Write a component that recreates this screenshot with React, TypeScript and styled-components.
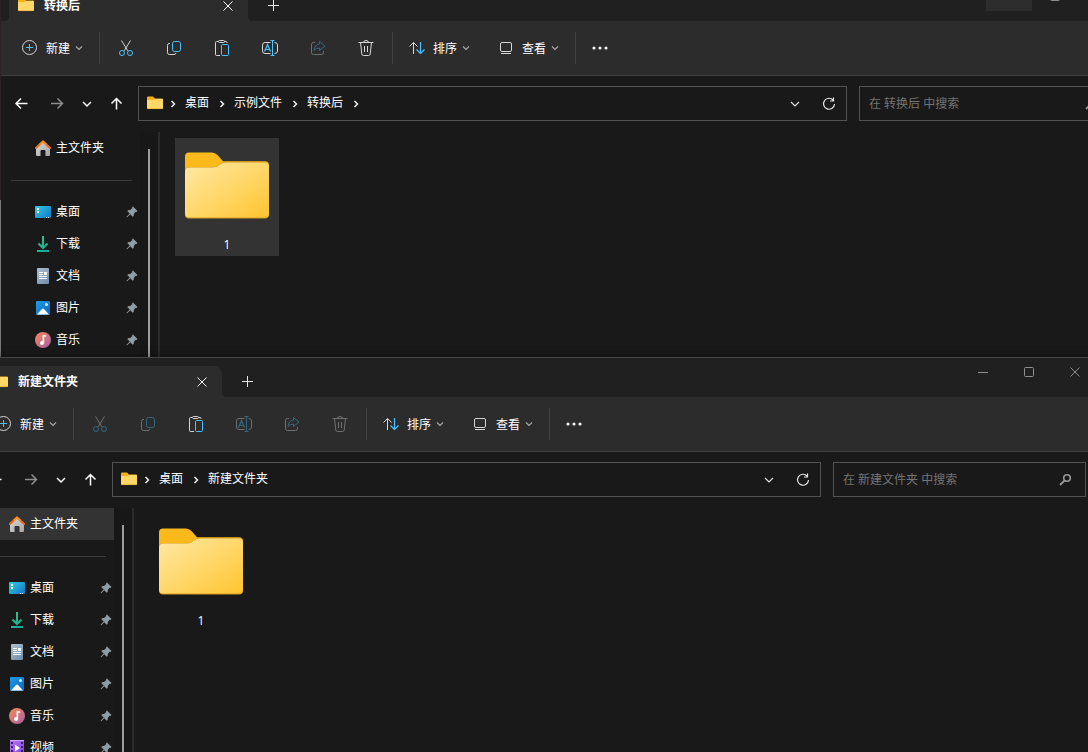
import React from 'react';
import styled, { createGlobalStyle, css } from 'styled-components';

const uiFont = `"Open Sans", "Noto Sans CJK SC", sans-serif`;

const GlobalStyle = createGlobalStyle`
  *, *::before, *::after { box-sizing: border-box; }
  body {
    margin: 0;
    background: #191919;
    color: #fff;
    font: 12px/16px ${uiFont};
    overflow: hidden;
  }
  button, input { font: inherit; color: inherit; }
  ul { list-style: none; margin: 0; padding: 0; }
  svg { display: block; flex: none; }
`;

const Desktop = styled.div`
  position: relative;
  height: 100vh;
  overflow: hidden;
  background: linear-gradient(#3b2c2d 0 200px, #9a9a9a 200px);
`;

const Frame = styled.section<{ $left: number; $top: number; $right: number }>`
  position: absolute;
  left: ${(p) => p.$left}px;
  right: ${(p) => p.$right}px;
  top: ${(p) => p.$top}px;
  bottom: 0;
  display: flex;
  flex-direction: column;
  border-top: 1px solid #454545;
  background: #191919;
  box-shadow: 0 0 8px rgba(0, 0, 0, 0.5);
`;

const TitleBar = styled.header`
  display: flex;
  height: 39px;
  padding-left: 8px;
  background: #202020;
`;

const Tab = styled.div`
  position: relative;
  display: flex;
  align-items: center;
  align-self: flex-end;
  width: 239px;
  height: 31px;
  padding: 0 8px 0 9px;
  background: #2c2c2c;
  border-radius: 8px 8px 0 0;
  font-weight: 700;
  &::before, &::after {
    content: '';
    position: absolute;
    bottom: 0;
    width: 4px;
    height: 4px;
  }
  &::before { left: -4px; background: radial-gradient(circle at 0 0, transparent 4px, #2c2c2c 4px); }
  &::after { right: -4px; background: radial-gradient(circle at 100% 0, transparent 4px, #2c2c2c 4px); }
`;

const TabTitle = styled.span`
  flex: 1;
  padding-left: 10px;
`;

const PlainButton = styled.button`
  display: flex;
  align-items: center;
  justify-content: center;
  padding: 0;
  border: 0;
  background: none;
`;

const TabButton = styled(PlainButton)`
  width: 24px;
  height: 24px;
`;

const NewTabButton = styled(PlainButton)`
  align-self: flex-end;
  width: 32px;
  height: 31px;
  margin-left: 9px;
`;

const WindowControls = styled.div`
  display: flex;
  margin-left: auto;
`;

const ControlButton = styled(PlainButton)<{ $hover?: boolean }>`
  width: 46px;
  height: 29px;
  padding-bottom: 1px;
  color: #8f8f8f;
  background: ${(p) => (p.$hover ? '#2d2d2d' : 'none')};
`;

const Toolbar = styled.div`
  display: flex;
  align-items: center;
  height: 55px;
  padding-left: 7px;
  background: #2c2c2c;
  border-bottom: 1px solid #3e3e3e;
`;

const ToolButton = styled(PlainButton)`
  width: 48px;
  height: 32px;
  &:disabled { opacity: 0.4; }
`;

const MoreButton = styled(ToolButton)`
  width: 44px;
`;

const MenuButton = styled(PlainButton)`
  height: 32px;
  padding: 0 14px;
`;

const MenuLabel = styled.span`
  padding: 2px 5px 0 8px;
`;

const Separator = styled.span`
  width: 1px;
  height: 32px;
  margin: 0 2px;
  background: #414141;
`;

const AddressRow = styled.div`
  display: flex;
  align-items: center;
  height: 56px;
  padding: 0 12px 1px 4px;
`;

const Nav = styled.nav`
  display: flex;
  gap: 1px;
  width: 133px;
`;

const NavButton = styled(PlainButton)<{ $narrow?: boolean }>`
  width: ${(p) => (p.$narrow ? 24 : 34)}px;
  height: 32px;
  &:disabled { color: #8e8e8e; }
`;

const fieldBox = css`
  display: flex;
  align-items: center;
  height: 35px;
  border: 1px solid #535353;
`;

const AddressBox = styled.div`
  ${fieldBox}
  flex: 1;
  min-width: 0;
  margin-right: 12px;
  padding-left: 8px;
`;

const Crumbs = styled.div`
  display: flex;
  align-items: center;
  flex: 1;
  padding-left: 6px;
`;

const Crumb = styled.a`
  padding: 0 9px 2px 8px;
  color: inherit;
  text-decoration: none;
  white-space: nowrap;
`;

const SearchBox = styled.label`
  ${fieldBox}
  width: 253px;
  padding: 0 13px 0 9px;
  color: #9a9a9a;
`;

const SearchInput = styled.input`
  flex: 1;
  min-width: 0;
  padding: 0;
  border: 0;
  outline: 0;
  background: none;
  &::placeholder { color: #747474; opacity: 1; }
`;

const Body = styled.div`
  display: flex;
  flex: 1;
  min-height: 0;
  overflow: hidden;
`;

const Sidebar = styled.aside`
  width: 139px;
`;

const PlaceRow = styled.a<{ $selected?: boolean }>`
  display: flex;
  align-items: center;
  gap: 5px;
  height: 32px;
  padding: 0 2px 0 34px;
  color: inherit;
  text-decoration: none;
  background: ${(p) => (p.$selected ? '#333' : 'none')};
`;

const PlaceName = styled.span`
  flex: 1;
`;

const Divider = styled.hr`
  height: 1px;
  margin: 16px 8px 15px 10px;
  border: 0;
  background: #3a3a3a;
`;

const ScrollTrack = styled.div`
  width: 18px;
  padding: 17px 8px 0;
  background: #171717;
`;

const ScrollThumb = styled.div`
  width: 2px;
  height: 100%;
  background: #9d9d9d;
`;

const Splitter = styled.div`
  width: 2px;
  background: #2b2b2b;
`;

const Content = styled.main`
  display: flex;
  align-items: flex-start;
  flex: 1;
  padding: 6px 15px;
`;

const Tile = styled.button<{ $selected?: boolean }>`
  display: flex;
  flex-direction: column;
  align-items: center;
  gap: 18px;
  width: 104px;
  padding: 14px 0 3px;
  border: 0;
  background: ${(p) => (p.$selected ? '#333' : 'none')};
`;

const blue = '#4cc2ff';
const grey = '#d6d6d6';

const SmallFolder = () => (
  <svg width="16" height="15" viewBox="0 0 16 15">
    <path d="M0 1.500Q0 .5 1 .5h5l2 2h7q1 0 1 1V12H0z" fill="#f7b012" />
    <path d="M0 4.500Q0 4 .6 4H6l1.600-1H15.400q.6 0 .6.6V12q0 1-1 1H1q-1 0-1-1z" fill="#ffd868" />
    <path d="M.5 12.600h15" stroke="#e9b33a" strokeWidth=".8" />
  </svg>
);

const LargeFolder = ({ id }: { id: string }) => (
  <svg width="84" height="67" viewBox="0 0 84 67">
    <defs>
      <linearGradient id={id} x1="0" y1="0" x2="1" y2="1">
        <stop offset="0" stopColor="#ffe9a6" />
        <stop offset="1" stopColor="#ffc530" />
      </linearGradient>
    </defs>
    <path d="M0 4.500Q0 .5 4 .5H27Q30 .5 32.500 3L38 9.300H80Q84 9.300 84 13.300V30H0z" fill="#fbb91b" />
    <path d="M0 20Q0 15 4.500 15H28Q32 15 34.500 12.500Q37 10 41 10H80Q84 10 84 14V62.500Q84 66.500 80 66.500H4Q0 66.500 0 62.500z" fill="#d19a22" />
    <path d="M0 20Q0 15.500 4.500 15.500H28Q32 15.500 34.500 13Q37 10.500 41 10.500H80Q84 10.500 84 14.500V61.500Q84 65.500 80 65.500H4Q0 65.500 0 61.500z" fill={`url(#${id})`} />
  </svg>
);

const Close = () => (
  <svg width="10" height="10" fill="none" stroke="currentColor">
    <path d="M.5.5l9 9M9.500.5l-9 9" />
  </svg>
);
const Plus = () => (
  <svg width="11" height="11" fill="none" stroke="#e8e8e8"><path d="M5.500 0v11M0 5.500h11" /></svg>
);
const Minimize = () => (
  <svg width="10" height="10" stroke="currentColor"><path d="M0 5.500h10" /></svg>
);
const Maximize = () => (
  <svg width="10" height="10" fill="none" stroke="currentColor"><rect x=".5" y=".5" width="9" height="9" rx="1" /></svg>
);
const Caret = () => (
  <svg width="8" height="6" viewBox="0 0 8 6" fill="none" stroke="#a8a8a8" strokeWidth="1.200"><path d="M1 1.500l3 3 3-3" /></svg>
);
const NewIcon = () => (
  <svg width="16" height="16" viewBox="0 0 16 16" fill="none">
    <circle cx="7.500" cy="7.500" r="7" stroke={grey} />
    <path d="M7.500 4v7M4 7.500h7" stroke={blue} />
  </svg>
);
const CutIcon = () => (
  <svg width="16" height="16" viewBox="0 0 16 16" fill="none">
    <path d="M3.500.5l6.300 10.300M12.500.5L6.200 10.800" stroke={grey} />
    <circle cx="4" cy="13" r="2.500" stroke={blue} />
    <circle cx="12" cy="13" r="2.500" stroke={blue} />
  </svg>
);
const CopyIcon = () => (
  <svg width="16" height="16" viewBox="0 0 16 16" fill="none">
    <path d="M4 3.500H3Q1.500 3.500 1.500 5.500v7q0 2 2 2H8q1.500 0 2-1.500" stroke={grey} />
    <rect x="6.500" y="1.500" width="8" height="10" rx="2" stroke={blue} />
  </svg>
);
const PasteIcon = () => (
  <svg width="16" height="18" viewBox="0 0 16 18" fill="none">
    <path d="M4 2.500H2.500q-1 0-1 1v12q0 1 1 1H6M10 2.500h2q1 0 1 1V4" stroke={grey} />
    <rect x="4.500" y="1.500" width="6" height="2" rx="1" stroke={grey} />
    <rect x="7.500" y="5.500" width="7" height="11" rx="1" stroke={blue} />
  </svg>
);
const RenameIcon = () => (
  <svg width="18" height="16" viewBox="0 0 18 16" fill="none">
    <path d="M9.500 2.500H4q-2.500 0-2.500 2.500v6q0 2.500 2.500 2.500h5.500M13.500 2.500q3 0 3 2.500v6q0 2.500-3 2.500" stroke={grey} />
    <path d="M3.500 11.500L6.500 4.500l3 7M4.500 9.500h4" stroke={blue} strokeWidth="1.200" />
    <path d="M11.500.5v15M9.500.5h4M9.500 15.500h4" stroke={blue} />
  </svg>
);
const ShareIcon = () => (
  <svg width="16" height="16" viewBox="0 0 16 16" fill="none">
    <path d="M5 2.500H3.500q-2 0-2 2v8q0 2 2 2h8q2 0 2-2V11" stroke={grey} />
    <path d="M9.500 1.500l5.500 4.500-5.500 4.500V8Q6 8 4 10.500 4.500 4.500 9.500 4z" stroke={blue} strokeLinejoin="round" />
  </svg>
);
const TrashIcon = () => (
  <svg width="16" height="18" viewBox="0 0 16 18" fill="none" stroke={grey}>
    <path d="M.5 3.500h15M5.500 3.500Q5.500 1.500 8 1.500t2.500 2M2.500 3.500l1.300 11.500q.2 1.500 1.700 1.500h5q1.500 0 1.700-1.500L13.500 3.500M6.500 7v6M9.500 7v6" />
  </svg>
);
const SortIcon = () => (
  <svg width="16" height="14" viewBox="0 0 16 14" fill="none">
    <path d="M4.500 13V1.500M.5 5.500l4-4 4 4" stroke={grey} />
    <path d="M11.500 1v11.500M7.500 8.500l4 4 4-4" stroke={blue} strokeWidth="1.200" />
  </svg>
);
const ViewIcon = () => (
  <svg width="16" height="14" viewBox="0 0 16 14" fill="none" stroke={grey}>
    <rect x="2.500" y="1.500" width="11" height="9" rx="1.500" />
    <path d="M3 12.500h10" />
  </svg>
);
const DotsIcon = () => (
  <svg width="16" height="4" fill="#f2f2f2"><circle cx="2" cy="2" r="1.600" /><circle cx="8" cy="2" r="1.600" /><circle cx="14" cy="2" r="1.600" /></svg>
);

const arrows = {
  back: 'M12.500 6.500H1.500M6 1.500l-5 5 5 5',
  forward: 'M1 6.500h11M7.500 1.500l5 5-5 5',
  recent: 'M3 5l4 4 4-4',
  up: 'M6.500 12.500V1.500M1.500 6.500l5-5 5 5',
};
const Arrow = ({ kind }: { kind: keyof typeof arrows }) => (
  <svg width="14" height="14" fill="none" stroke="currentColor" strokeWidth="1.500"><path d={arrows[kind]} /></svg>
);
const CrumbArrow = () => (
  <svg width="8" height="8" fill="none" stroke="#f0f0f0" strokeWidth="1.500"><path d="M2.500 1L5.500 4l-3 3" /></svg>
);
const DropArrow = () => (
  <svg width="10" height="8" fill="none" stroke="#e0e0e0" strokeWidth="1.200"><path d="M1 2l4 4 4-4" /></svg>
);
const RefreshIcon = () => (
  <svg width="14" height="14" fill="none" stroke="#e6e6e6" strokeWidth="1.200">
    <path d="M11.300 3.300A5.500 5.500 0 1 0 12.500 7M11.500 .5v3.500H8" />
  </svg>
);
const SearchIcon = () => (
  <svg width="13" height="13" fill="none" stroke="currentColor">
    <circle cx="8" cy="5" r="3.300" strokeWidth="1.600" />
    <path d="M5.500 7.500L1 12" strokeWidth="1.800" />
  </svg>
);
const PinIcon = () => (
  <svg width="12" height="12" viewBox="0 0 12 12" fill="#8f9ca4">
    <path d="M7 .5L11.500 5l-1 1-.8-.2L7.800 8l-.1 2-1 .8-2.500-2.500L1.200 11.200H.7v-.6l3-3L1.200 5.100 2 4.300l2-.2 2.200-1.900-.2-.8z" />
  </svg>
);

type PlaceKind = 'home' | 'desktop' | 'download' | 'document' | 'picture' | 'music' | 'video';

const PlaceIcon = ({ kind, scope }: { kind: PlaceKind; scope: string }) => {
  const id = `${scope}-${kind}`;
  const stops: Record<PlaceKind, [string, string]> = {
    home: ['#dedede', '#a3a3a3'],
    desktop: ['#35d3e6', '#0f6fc4'],
    download: ['#35cf85', '#12a09a'],
    document: ['#b4c5d6', '#6a86a3'],
    picture: ['#1fa0ea', '#0b62b8'],
    music: ['#f58a55', '#a85fa8'],
    video: ['#b779f2', '#7a3fd8'],
  };
  const fill = `url(#${id})`;
  return (
    <svg width="16" height="16" viewBox="0 0 16 16" fill="none">
      <defs>
        <linearGradient id={id} x1="0" y1="0" x2="16" y2="16" gradientUnits="userSpaceOnUse">
          <stop offset="0" stopColor={stops[kind][0]} />
          <stop offset="1" stopColor={stops[kind][1]} />
        </linearGradient>
      </defs>
      {kind === 'home' && (
        <>
          <path d="M1 7l7-6 7 6v8q0 1-1 1h-3.500v-5q0-1-1-1h-3q-1 0-1 1v5H2q-1 0-1-1z" fill={fill} />
          <path d="M.8 8L8 1.400 15.200 8" stroke="#e8681a" strokeWidth="2" strokeLinejoin="round" strokeLinecap="round" />
          <path d="M4.500 4.500L8 1.400l3.500 3.100" stroke="#f79421" strokeWidth="1.600" strokeLinejoin="round" />
        </>
      )}
      {kind === 'desktop' && (
        <>
          <rect y="2" width="16" height="12" rx="1" fill={fill} />
          <path d="M2 4h2v2H2zM2 7h2v2H2zM11 13h1v1h-1zM13 13h1v1h-1z" fill="#fff" />
        </>
      )}
      {kind === 'download' && (
        <>
          <path d="M8 0v12M3.500 7.500L8 12l4.500-4.500" stroke={fill} strokeWidth="2" />
          <path d="M2 14h12v2H2z" fill={fill} />
        </>
      )}
      {kind === 'document' && (
        <>
          <rect x="2" width="12" height="16" rx="1" fill={fill} />
          <path d="M4 4.500h4M4 6.500h4M4 8.500h8M4 10.500h8" stroke="#fff" />
          <path d="M9 4h3v3H9z" fill="#fff" />
        </>
      )}
      {kind === 'picture' && (
        <>
          <rect x="1" y="1" width="14" height="14" rx="1" fill={fill} />
          <path d="M2 14.500L7 9q1-1 2 0l5 5.500z" fill="#fff" />
          <circle cx="11.500" cy="4.500" r="1.500" fill="#cfefff" />
        </>
      )}
      {kind === 'music' && (
        <>
          <circle cx="8" cy="8" r="8" fill={fill} />
          <circle cx="7" cy="11" r="2" fill="#fff" />
          <path d="M8.400 11V4h2.800" stroke="#fff" strokeWidth="1.600" />
        </>
      )}
      {kind === 'video' && (
        <>
          <rect x="1" width="14" height="16" rx="1" fill={fill} />
          <path d="M1 0h14v1H1z" fill="#d3a6ff" />
          <path d="M3 2v14M13 2v14" stroke="#3d1a80" strokeWidth="2" strokeDasharray="2 2" />
          <path d="M6 4.500v7l5-3.500z" fill="#fff" />
        </>
      )}
    </svg>
  );
};

interface Place {
  name: string;
  kind: PlaceKind;
}

const pinned: Place[] = [
  { name: '桌面', kind: 'desktop' },
  { name: '下载', kind: 'download' },
  { name: '文档', kind: 'document' },
  { name: '图片', kind: 'picture' },
  { name: '音乐', kind: 'music' },
];

interface ExplorerProps {
  id: string;
  title: string;
  path: string[];
  places: Place[];
  openPath?: boolean;
  left: number;
  right: number;
  top: number;
  hasSelection?: boolean;
  homeSelected?: boolean;
}

const Explorer = ({ id, title, path, places, openPath, left, right, top, hasSelection, homeSelected }: ExplorerProps) => (
  <Frame $left={left} $right={right} $top={top} aria-label={title}>
    <TitleBar>
      <Tab>
        <SmallFolder />
        <TabTitle>{title}</TabTitle>
        <TabButton aria-label="关闭标签页"><Close /></TabButton>
      </Tab>
      <NewTabButton aria-label="新标签页"><Plus /></NewTabButton>
      <WindowControls>
        <ControlButton aria-label="最小化" $hover={hasSelection}><Minimize /></ControlButton>
        <ControlButton aria-label="最大化"><Maximize /></ControlButton>
        <ControlButton aria-label="关闭"><Close /></ControlButton>
      </WindowControls>
    </TitleBar>
    <Toolbar>
      <MenuButton><NewIcon /><MenuLabel>新建</MenuLabel><Caret /></MenuButton>
      <Separator />
      <ToolButton aria-label="剪切" disabled={!hasSelection}><CutIcon /></ToolButton>
      <ToolButton aria-label="复制" disabled={!hasSelection}><CopyIcon /></ToolButton>
      <ToolButton aria-label="粘贴"><PasteIcon /></ToolButton>
      <ToolButton aria-label="重命名" disabled={!hasSelection}><RenameIcon /></ToolButton>
      <ToolButton aria-label="共享" disabled><ShareIcon /></ToolButton>
      <ToolButton aria-label="删除" disabled={!hasSelection}><TrashIcon /></ToolButton>
      <Separator />
      <MenuButton><SortIcon /><MenuLabel>排序</MenuLabel><Caret /></MenuButton>
      <MenuButton><ViewIcon /><MenuLabel>查看</MenuLabel><Caret /></MenuButton>
      <Separator />
      <MoreButton aria-label="更多"><DotsIcon /></MoreButton>
    </Toolbar>
    <AddressRow>
      <Nav>
        <NavButton aria-label="后退"><Arrow kind="back" /></NavButton>
        <NavButton aria-label="前进" disabled><Arrow kind="forward" /></NavButton>
        <NavButton aria-label="最近的位置" $narrow><Arrow kind="recent" /></NavButton>
        <NavButton aria-label="上移"><Arrow kind="up" /></NavButton>
      </Nav>
      <AddressBox>
        <SmallFolder />
        <Crumbs>
          <CrumbArrow />
          {path.map((part, i) => (
            <React.Fragment key={part}>
              <Crumb href="#">{part}</Crumb>
              {(openPath || i < path.length - 1) && <CrumbArrow />}
            </React.Fragment>
          ))}
        </Crumbs>
        <NavButton aria-label="以前的位置"><DropArrow /></NavButton>
        <NavButton aria-label="刷新"><RefreshIcon /></NavButton>
      </AddressBox>
      <SearchBox>
        <SearchInput type="text" aria-label="搜索" placeholder={`在 ${title} 中搜索`} />
        <SearchIcon />
      </SearchBox>
    </AddressRow>
    <Body>
      <Sidebar>
        <PlaceRow href="#" $selected={homeSelected}>
          <PlaceIcon kind="home" scope={id} />
          <PlaceName>主文件夹</PlaceName>
        </PlaceRow>
        <Divider />
        <ul>
          {places.map((place) => (
            <li key={place.kind}>
              <PlaceRow href="#">
                <PlaceIcon kind={place.kind} scope={id} />
                <PlaceName>{place.name}</PlaceName>
                <PinIcon />
              </PlaceRow>
            </li>
          ))}
        </ul>
      </Sidebar>
      <ScrollTrack><ScrollThumb /></ScrollTrack>
      <Splitter />
      <Content>
        <Tile $selected={hasSelection}>
          <LargeFolder id={`${id}-folder`} />
          <span>1</span>
        </Tile>
      </Content>
    </Body>
  </Frame>
);

export default function App() {
  return (
    <>
      <GlobalStyle />
      <Desktop>
        <Explorer
          id="source"
          title="转换后"
          path={['桌面', '示例文件', '转换后']}
          places={pinned}
          openPath
          left={1}
          right={-36}
          top={-19}
          hasSelection
        />
        <Explorer
          id="target"
          title="新建文件夹"
          path={['桌面', '新建文件夹']}
          places={[...pinned, { name: '视频', kind: 'video' }]}
          left={-25}
          right={-10}
          top={357}
          homeSelected
        />
      </Desktop>
    </>
  );
}
